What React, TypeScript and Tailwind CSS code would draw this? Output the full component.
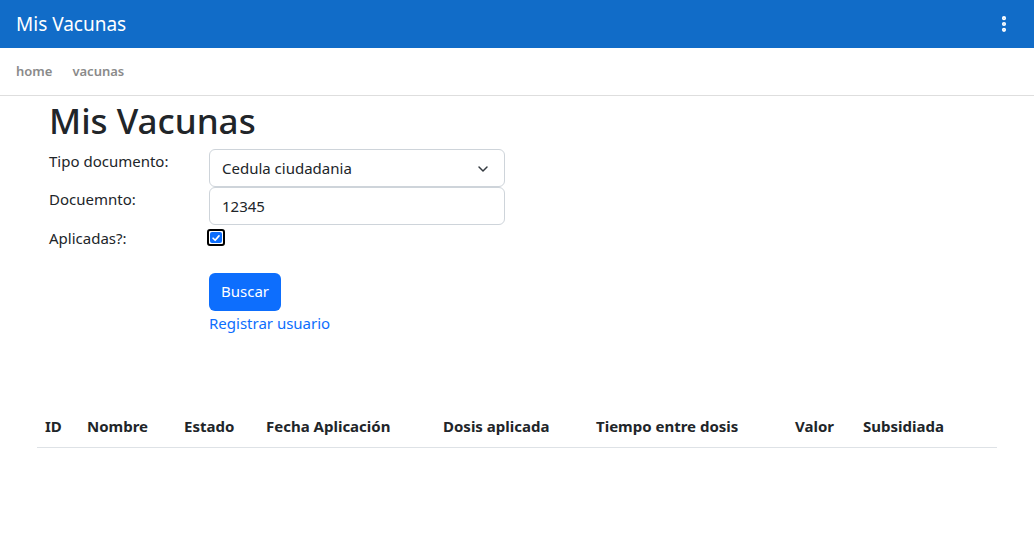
import React, { useState } from 'react';
import { ChevronDown, EllipsisVertical } from 'lucide-react';

const columns = [
  { label: 'ID', w: 'w-[42px]' },
  { label: 'Nombre', w: 'w-[97px]' },
  { label: 'Estado', w: 'w-[82px]' },
  { label: 'Fecha Aplicación', w: 'w-[177px]' },
  { label: 'Dosis aplicada', w: 'w-[153px]' },
  { label: 'Tiempo entre dosis', w: 'w-[199px]' },
  { label: 'Valor', w: 'w-[68px]' },
  { label: 'Subsidiada', w: 'w-[142px]' },
];

export default function App() {
  const [tipo, setTipo] = useState('Cedula ciudadania');
  const [doc, setDoc] = useState('12345');
  const [aplicadas, setAplicadas] = useState(true);

  return (
    <div className="min-h-[535px] bg-white text-[#212529] font-['Noto_Sans',sans-serif]">
      {/* toolbar */}
      <header className="h-12 bg-[#116cc8] flex items-center justify-between pl-4 pr-5 text-white">
        <span className="text-[19px] leading-none">Mis Vacunas</span>
        <button className="text-white">
          <EllipsisVertical className="w-5 h-5" strokeWidth={3} />
        </button>
      </header>

      {/* sub nav */}
      <nav className="h-12 border-b border-[#dedede] flex items-center gap-5 px-4 text-[13px] font-semibold text-[#8a8a8a]">
        <a href="#">home</a>
        <a href="#">vacunas</a>
      </nav>

      <main className="px-[49px]">
        <h1 className="text-[35px] leading-[1.2] font-medium mt-[4px] mb-[7px]">Mis Vacunas</h1>

        <div className="flex flex-col text-[15px]">
          <div className="flex items-start">
            <label className="w-40 pt-[1px]">Tipo documento:</label>
            <div className="relative w-[296px]">
              <select
                value={tipo}
                onChange={(e) => setTipo(e.target.value)}
                className="appearance-none w-full h-[38px] border border-[#ced4da] rounded-[6px] pl-3 pr-9 text-[15px] bg-white"
              >
                <option>Cedula ciudadania</option>
                <option>Tarjeta identidad</option>
                <option>Pasaporte</option>
              </select>
              <ChevronDown className="absolute right-[14px] top-[12px] w-4 h-4 text-[#343a40] pointer-events-none" strokeWidth={2.2} />
            </div>
          </div>

          <div className="flex items-start">
            <label className="w-40 pt-[1px]">Docuemnto:</label>
            <input
              value={doc}
              onChange={(e) => setDoc(e.target.value)}
              className="w-[296px] h-[38px] border border-[#ced4da] rounded-[6px] px-3 text-[15px]"
            />
          </div>

          <div className="flex items-start mt-[2px]">
            <label className="w-40">Aplicadas?:</label>
            <button
              onClick={() => setAplicadas(!aplicadas)}
              className="-ml-[2px] mt-[2px] w-[18px] h-[17px] rounded-[3px] border-2 border-black bg-white flex items-center justify-center"
            >
              {aplicadas && (
                <span className="w-[12px] h-[11px] rounded-[2px] bg-[#0d6efd] flex items-center justify-center">
                  <svg viewBox="0 0 12 12" className="w-[10px] h-[10px]">
                    <path d="M2.5 6.3 L5 8.7 L9.6 3.4" fill="none" stroke="white" strokeWidth="2" strokeLinecap="round" strokeLinejoin="round" />
                  </svg>
                </span>
              )}
            </button>
          </div>

          <div className="pl-40 mt-[23px] flex flex-col items-start">
            <button className="h-[38px] px-[12px] rounded-[6px] bg-[#0d6efd] text-white text-[15px]">Buscar</button>
            <a href="#" className="text-[#0d6efd] mt-[1px]">Registrar usuario</a>
          </div>
        </div>
      </main>

      <div className="px-[37px] mt-[72px]">
        <table className="w-[960px] table-fixed border-collapse">
          <thead>
            <tr className="border-b border-[#dee2e6]">
              {columns.map((c) => (
                <th key={c.label} className={`${c.w} text-left px-2 py-[9px] text-[15px] font-bold`}>
                  {c.label}
                </th>
              ))}
            </tr>
          </thead>
          <tbody></tbody>
        </table>
      </div>
    </div>
  );
}
